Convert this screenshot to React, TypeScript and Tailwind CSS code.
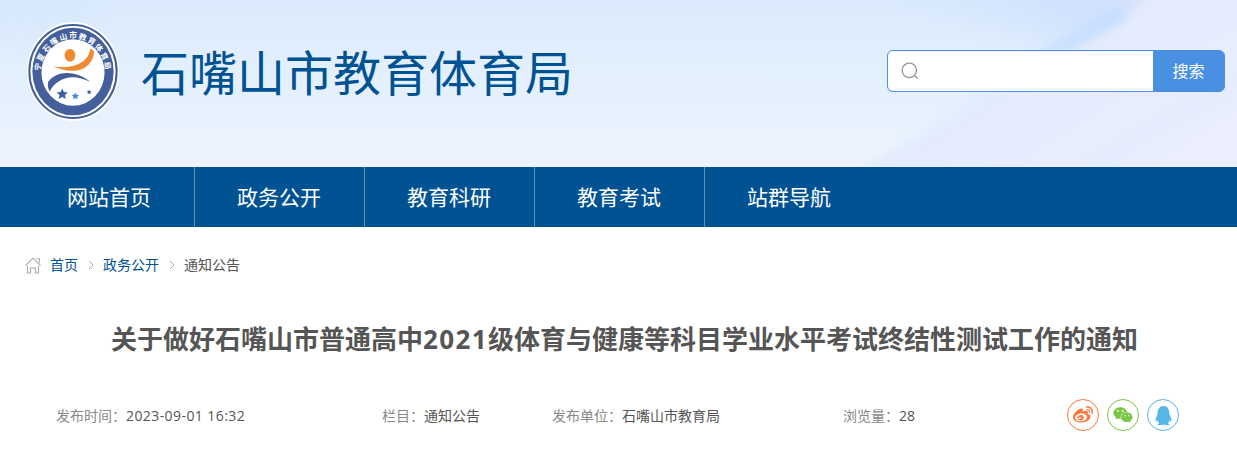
import React from 'react';
import { FaQq, FaWeibo, FaWeixin } from 'react-icons/fa';

const navItems = ['网站首页', '政务公开', '教育科研', '教育考试', '站群导航'];

// Characters of the seal, with their place on the ring
const sealText = [
  { char: '宁', x: 71, y: 154, angle: -80 },
  { char: '夏', x: 80, y: 125, angle: -62 },
  { char: '石', x: 97, y: 98, angle: -46 },
  { char: '嘴', x: 119, y: 77, angle: -30 },
  { char: '山', x: 147, y: 63, angle: -14 },
  { char: '市', x: 176, y: 59, angle: 0 },
  { char: '教', x: 205, y: 64, angle: 15 },
  { char: '育', x: 232, y: 76, angle: 30 },
  { char: '体', x: 254, y: 96, angle: 46 },
  { char: '育', x: 270, y: 122, angle: 62 },
  { char: '局', x: 279, y: 150, angle: 80 },
];

const star = 'M0-17 5-6 17-5 8 3 11 15 0 9-11 15-8 3-17-5-5-6Z';

const Seal: React.FC = () => (
  <svg viewBox="39 19 274 298" preserveAspectRatio="none" className="h-[99px] w-[92px] shrink-0">
    <ellipse cx="176" cy="168" rx="137" ry="149" fill="#fff" />
    <ellipse cx="176" cy="168" rx="130" ry="140" fill="none" stroke="#445f9b" strokeWidth="6" />
    <ellipse cx="176" cy="168" rx="121" ry="132" fill="#445f9b" />
    <ellipse cx="176" cy="171" rx="94" ry="100" fill="#fff" />
    {sealText.map((item, idx) => (
      <text
        key={idx}
        transform={`translate(${item.x} ${item.y}) rotate(${item.angle})`}
        textAnchor="middle"
        dominantBaseline="central"
        fill="#fff"
        fontSize="23"
        fontWeight="700"
      >
        {item.char}
      </text>
    ))}
    <ellipse cx="167" cy="119" rx="16" ry="19" fill="#ee8a31" />
    <path d="M117 152C151 159 181 155 204 139C218 129 226 115 227 99L239 107C237 133 224 152 202 161C174 171 142 164 117 152Z" fill="#ee8a31" />
    <path d="M102 199C117 178 142 170 166 173C190 175 211 185 228 199C202 187 176 181 154 188C131 195 115 210 107 228C101 220 100 210 102 199Z" fill="#445f9b" />
    <path d={star} transform="translate(144 236)" fill="#3f639f" />
    <path d={star} transform="translate(183 242) scale(.65)" fill="#478ac1" />
    <path d={star} transform="translate(224 230) scale(.45)" fill="#445f9b" />
  </svg>
);

const HeaderBackground: React.FC = () => (
  <svg viewBox="0 0 1237 167" className="absolute inset-0 h-full w-full">
    <defs>
      <linearGradient id="sky" x1="0" y1="0" x2="0" y2="1">
        <stop offset="0" stopColor="#dbebfd" />
        <stop offset=".5" stopColor="#e4f0fd" />
        <stop offset="1" stopColor="#edf4fe" />
      </linearGradient>
      <linearGradient id="lilac" gradientUnits="userSpaceOnUse" x1="990" y1="100" x2="1070" y2="230">
        <stop offset="0" stopColor="#e3ebfd" />
        <stop offset="1" stopColor="#eaeefd" />
      </linearGradient>
      <linearGradient id="ray" x1="1" y1="0" x2="0" y2="1">
        <stop offset="0" stopColor="#c3dcfd" />
        <stop offset="1" stopColor="#d9ebfe" stopOpacity="0" />
      </linearGradient>
      <linearGradient id="corner" x1="0" y1="0" x2="1" y2="0">
        <stop offset="0" stopColor="#cfe2fd" stopOpacity="0" />
        <stop offset=".65" stopColor="#d0e1fd" />
        <stop offset="1" stopColor="#e2e4fb" />
      </linearGradient>
      <filter id="soft" x="-20%" y="-20%" width="140%" height="140%">
        <feGaussianBlur stdDeviation="4" />
      </filter>
      <filter id="wide" x="-30%" y="-60%" width="160%" height="220%">
        <feGaussianBlur stdDeviation="18" />
      </filter>
    </defs>
    <rect width="1237" height="167" fill="url(#sky)" />
    <path d="M780-40H1260V15L1080 45Z" fill="url(#corner)" filter="url(#wide)" />
    <ellipse cx="20" cy="15" rx="90" ry="20" fill="#cfe4fc" opacity=".4" filter="url(#wide)" />
    <path d="M1125 20L860 170H1260V-10H1150Z" fill="url(#lilac)" filter="url(#soft)" />
    <path d="M1116 8L1126 18L900 150L880 150Z" fill="url(#ray)" opacity=".7" filter="url(#soft)" />
    <path d="M1114 8Q1130 10 1122 20L1030 72L1032 54Z" fill="#c4defe" opacity=".5" filter="url(#soft)" />
    <path d="M1237 78L1080 167H1110L1237 98Z" fill="#dfeafd" opacity=".35" filter="url(#soft)" />
  </svg>
);

const Chevron: React.FC = () => (
  <svg viewBox="0 0 6 10" className="mt-0.5 h-[10px] w-[6px]" fill="none" stroke="#aaa">
    <path d="M1 1l4 4-4 4" />
  </svg>
);

const App: React.FC = () => {
  return (
    <div className="h-[452px] overflow-hidden bg-white font-['Open_Sans','Noto_Sans_CJK_SC',sans-serif] text-[14px] text-[#555]">
      <header className="relative h-[167px] overflow-hidden">
        <HeaderBackground />
        <div className="relative flex items-start justify-between pr-3 pl-[27px]">
          <div className="flex pt-[22px]">
            <Seal />
            <h1 className="ml-[22px] pt-4 text-[48px] leading-[70px] whitespace-nowrap text-[#005293]">
              石嘴山市教育体育局
            </h1>
          </div>
          <div className="mt-[50px] flex h-[42px] w-[338px] overflow-hidden rounded-[6px] border border-[#4a90e2] bg-[#4a90e2]">
            <div className="flex flex-1 items-center bg-white pl-[13px]">
              <svg viewBox="0 0 18 18" className="h-[18px] w-[18px]" fill="none" stroke="#999" strokeWidth="1.4">
                <circle cx="8.3" cy="8.3" r="7.2" />
                <path d="M13.3 13.3l3.4 3.2" />
              </svg>
            </div>
            <button className="w-[71px] text-[16px] text-white">搜索</button>
          </div>
        </div>
      </header>

      <nav className="flex h-[60px] bg-[#005293] pl-[25px] text-[21px] leading-[60px] text-white">
        {navItems.map((item) => (
          <a key={item} className="w-[170px] border-r border-[#5c90ba] pr-px text-center last:border-r-0 last:pr-[2px]">
            {item}
          </a>
        ))}
      </nav>

      <div className="flex h-[76px] items-center pb-0.5 pl-[25px] text-[#005293]">
        <svg viewBox="0 0 16 17" className="mt-0.5 mr-[9px] h-[17px] w-4" fill="none" stroke="#aaa" strokeWidth="1.1">
          <path d="M.5 8.5L8 1.2l7.5 7.3M11.5 1.7h3v4M2.5 9v7h3v-5h5v5h3V9" />
        </svg>
        <a>首页</a>
        <span className="flex w-[25px] justify-center"><Chevron /></span>
        <a>政务公开</a>
        <span className="flex w-[25px] justify-center"><Chevron /></span>
        <span className="text-[#555]">通知公告</span>
      </div>

      <main>
        <h2 className="mt-4 pl-[111px] text-[26px] leading-[40px] font-bold whitespace-nowrap text-[#555]">
          关于做好石嘴山市普通高中<span className="tracking-[1.4px]">2021</span>级体育与健康等科目学业水平考试终结性测试工作的通知
        </h2>
        <div className="mt-[40px] flex h-8 items-center pl-14 text-[#888]">
          <div className="w-[326px] pt-px">
            发布时间：<span className="tracking-[0.42px] text-[#555]">2023-09-01 16:32</span>
          </div>
          <div className="w-[170px] pt-px">
            栏目：<span className="text-[#555]">通知公告</span>
          </div>
          <div className="w-[291px] pt-px">
            发布单位：<span className="text-[#555]">石嘴山市教育局</span>
          </div>
          <div className="w-[224px] pt-px">
            浏览量：<span className="text-[#555]">28</span>
          </div>
          <div className="flex gap-2">
            <a className="flex h-8 w-8 items-center justify-center rounded-full border border-[#ff763b] text-[#ff763b]">
              <FaWeibo size={20} />
            </a>
            <a className="flex h-8 w-8 items-center justify-center rounded-full border border-[#7bc549] text-[#7bc549]">
              <FaWeixin size={20} />
            </a>
            <a className="flex h-8 w-8 items-center justify-center rounded-full border border-[#56b6e7] text-[#56b6e7]">
              <FaQq size={19} />
            </a>
          </div>
        </div>
      </main>
    </div>
  );
};

export default App;
